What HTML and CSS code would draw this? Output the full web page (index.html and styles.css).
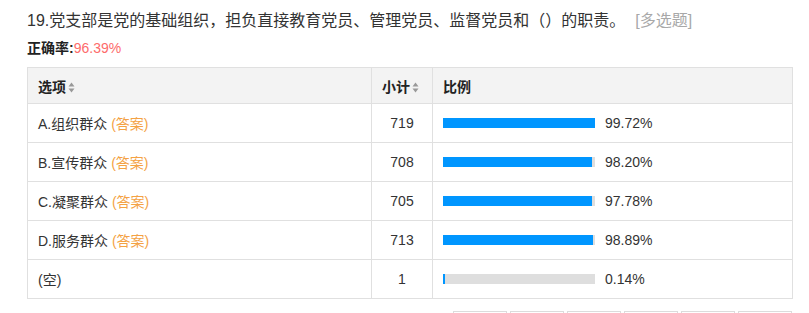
FILE: index.html
```html
<!DOCTYPE html>
<html lang="zh">
<head>
<meta charset="utf-8">
<link rel="stylesheet" href="styles.css">
</head>
<body>
<div class="question">
  <div class="title">19.党支部是党的基础组织，担负直接教育党员、管理党员、监督党员和（）的职责。<span class="qtype">[多选题]</span></div>
  <div class="rate"><b>正确率:</b><span class="rate-val">96.39%</span></div>
  <table class="stats">
    <thead>
      <tr>
        <th class="c-opt">选项<svg class="sort" width="7" height="11" viewBox="0 0 7 11"><path d="M3.5 0.5L6.5 4.5H0.5Z" fill="#999"/><path d="M3.5 10.5L6.5 6.5H0.5Z" fill="#999"/></svg></th>
        <th class="c-num">小计<svg class="sort" width="7" height="11" viewBox="0 0 7 11"><path d="M3.5 0.5L6.5 4.5H0.5Z" fill="#999"/><path d="M3.5 10.5L6.5 6.5H0.5Z" fill="#999"/></svg></th>
        <th class="c-pct">比例</th>
      </tr>
    </thead>
    <tbody>
      <tr>
        <td class="c-opt">A.组织群众 <span class="ans">(答案)</span></td>
        <td class="c-num">719</td>
        <td class="c-pct"><div class="pct"><div class="bar"><div class="fill" style="width:99.72%"></div></div><span>99.72%</span></div></td>
      </tr>
      <tr>
        <td class="c-opt">B.宣传群众 <span class="ans">(答案)</span></td>
        <td class="c-num">708</td>
        <td class="c-pct"><div class="pct"><div class="bar"><div class="fill" style="width:98.20%"></div></div><span>98.20%</span></div></td>
      </tr>
      <tr>
        <td class="c-opt">C.凝聚群众 <span class="ans">(答案)</span></td>
        <td class="c-num">705</td>
        <td class="c-pct"><div class="pct"><div class="bar"><div class="fill" style="width:97.78%"></div></div><span>97.78%</span></div></td>
      </tr>
      <tr>
        <td class="c-opt">D.服务群众 <span class="ans">(答案)</span></td>
        <td class="c-num">713</td>
        <td class="c-pct"><div class="pct"><div class="bar"><div class="fill" style="width:98.89%"></div></div><span>98.89%</span></div></td>
      </tr>
      <tr>
        <td class="c-opt">(空)</td>
        <td class="c-num">1</td>
        <td class="c-pct"><div class="pct"><div class="bar"><div class="fill" style="width:2px"></div></div><span>0.14%</span></div></td>
      </tr>
    </tbody>
  </table>
  <div class="tabs">
    <div class="tab"></div><div class="tab"></div><div class="tab"></div><div class="tab"></div><div class="tab"></div><div class="tab"></div>
  </div>
</div>
</body>
</html>
```
FILE: styles.css
```css
html, body {
  margin: 0;
  padding: 0;
  background: #fff;
}
body {
  font-family: "Liberation Sans", Arial, "Noto Sans CJK SC", sans-serif;
  color: #333;
  overflow: hidden;
}
.question {
  padding: 11px 17px 0 27px;
}
.title {
  font-size: 16px;
  line-height: 20px;
  color: #333;
}
.qtype {
  color: #a8a8a8;
  margin-left: 10px;
}
.rate {
  margin-top: 7px;
  font-size: 14px;
  line-height: 20px;
}
.rate b {
  color: #222;
}
.rate-val {
  color: #fd6b6b;
}
.stats {
  margin-top: 9px;
  width: 765px;
  border-collapse: collapse;
  font-size: 14px;
  table-layout: fixed;
}
.stats th, .stats td {
  border: 1px solid #e0e0e0;
  padding: 0 10px;
  text-align: left;
}
.stats th {
  background: #f3f3f3;
  height: 35px;
  font-weight: bold;
  color: #222;
}
.stats td {
  height: 38px;
  color: #333;
}
.stats .c-opt { width: 323px; }
.stats .c-num { width: 40px; text-align: center; }
.stats th.c-num { text-align: left; }
.stats .c-pct { width: 339px; }
.sort {
  margin-left: 2px;
  vertical-align: -1px;
}
.ans {
  color: #f4a244;
}
.pct {
  display: flex;
  align-items: center;
  gap: 10px;
}
.bar {
  width: 152px;
  height: 10px;
  background: #dedede;
}
.fill {
  height: 100%;
  background: #0096ff;
}
.tabs {
  display: flex;
  justify-content: flex-end;
  gap: 3px;
  margin-top: 12px;
}
.tab {
  width: 54px;
  height: 30px;
  border: 1px solid #dcdcdc;
  box-sizing: border-box;
  background: #fff;
}
```
